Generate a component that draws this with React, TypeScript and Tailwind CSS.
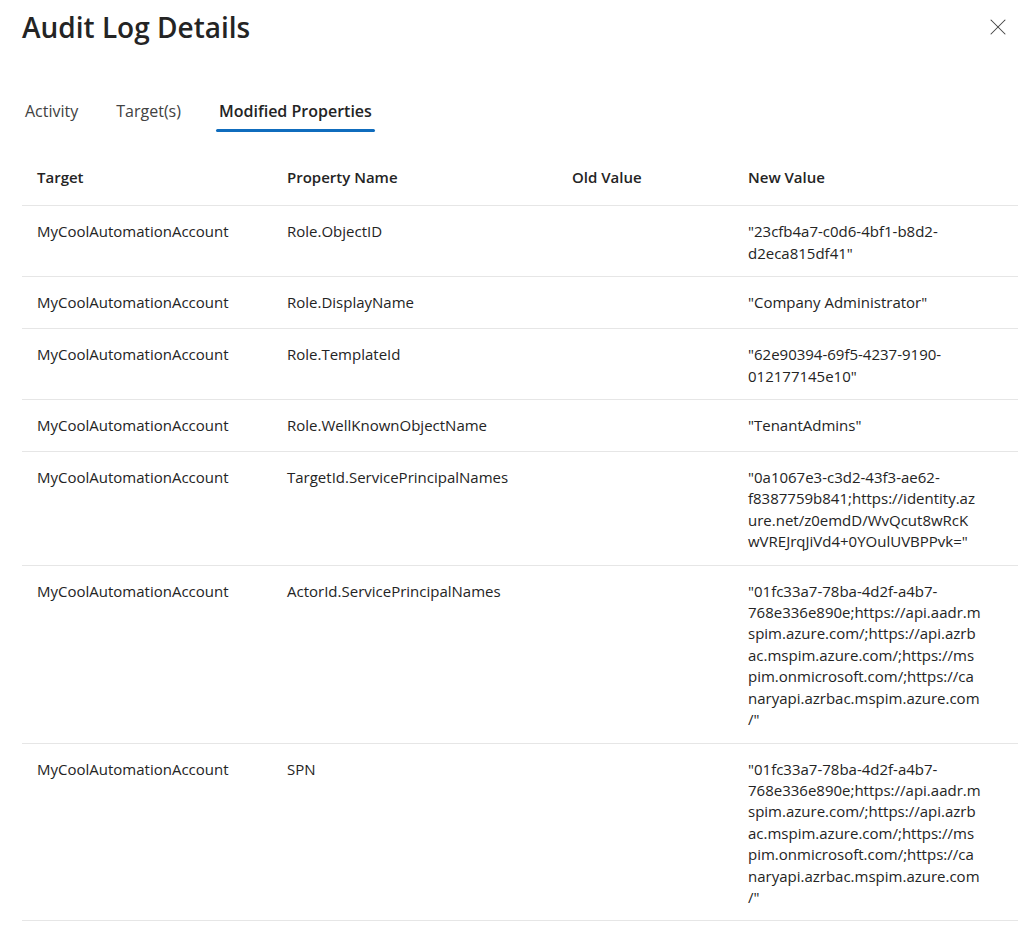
import { X } from "lucide-react";

type Row = {
  target: string;
  property: string;
  oldValue: string;
  newValue: string;
};

// New values keep the line breaks of the portal's narrow column
const spnValue = [
  '"01fc33a7-78ba-4d2f-a4b7-',
  "768e336e890e;https://api.aadr.m",
  "spim.azure.com/;https://api.azrb",
  "ac.mspim.azure.com/;https://ms",
  "pim.onmicrosoft.com/;https://ca",
  "naryapi.azrbac.mspim.azure.com",
  '/"',
].join("\n");

const rows: Row[] = [
  {
    target: "MyCoolAutomationAccount",
    property: "Role.ObjectID",
    oldValue: "",
    newValue: '"23cfb4a7-c0d6-4bf1-b8d2-\nd2eca815df41"',
  },
  {
    target: "MyCoolAutomationAccount",
    property: "Role.DisplayName",
    oldValue: "",
    newValue: '"Company Administrator"',
  },
  {
    target: "MyCoolAutomationAccount",
    property: "Role.TemplateId",
    oldValue: "",
    newValue: '"62e90394-69f5-4237-9190-\n012177145e10"',
  },
  {
    target: "MyCoolAutomationAccount",
    property: "Role.WellKnownObjectName",
    oldValue: "",
    newValue: '"TenantAdmins"',
  },
  {
    target: "MyCoolAutomationAccount",
    property: "TargetId.ServicePrincipalNames",
    oldValue: "",
    newValue:
      '"0a1067e3-c3d2-43f3-ae62-\nf8387759b841;https://identity.az\nure.net/z0emdD/WvQcut8wRcK\nwVREJrqJiVd4+0YOulUVBPPvk="',
  },
  {
    target: "MyCoolAutomationAccount",
    property: "ActorId.ServicePrincipalNames",
    oldValue: "",
    newValue: spnValue,
  },
  {
    target: "MyCoolAutomationAccount",
    property: "SPN",
    oldValue: "",
    newValue: spnValue,
  },
];

const tabs = ["Activity", "Target(s)", "Modified Properties"];

export default function App() {
  return (
    <div className="w-[1024px] min-h-[925px] bg-white text-[#242424] font-['Segoe_UI','Open_Sans',sans-serif]">
      {/* Header */}
      <div className="flex items-start justify-between pl-[22px] pr-[12px] pt-[8px]">
        <h1 className="text-[28px] leading-[38px] font-semibold">Audit Log Details</h1>
        <button className="mt-[5px] text-[#424242]" aria-label="Close">
          <X size={28} strokeWidth={0.9} />
        </button>
      </div>

      {/* Tabs */}
      <div className="mt-[54px] flex gap-[32px] pl-[22px]">
        {tabs.map((tab) => {
          const active = tab === "Modified Properties";
          return (
            <div key={tab} className="flex flex-col items-stretch">
              <span
                className={`px-[3px] text-[16px] leading-[22px] ${
                  active ? "font-semibold text-[#242424]" : "text-[#424242]"
                }`}
              >
                {tab}
              </span>
              <span
                className={`mt-[7px] h-[3px] rounded-full ${active ? "bg-[#0f6cbd]" : "bg-transparent"}`}
              />
            </div>
          );
        })}
      </div>

      {/* Table */}
      <table className="mt-[19px] ml-[22px] w-[996px] table-fixed border-collapse text-[15px] leading-[21.4px]">
        <colgroup>
          <col className="w-[250px]" />
          <col className="w-[285px]" />
          <col className="w-[176px]" />
          <col className="w-[285px]" />
        </colgroup>
        <thead>
          <tr className="border-b border-[#e6e6e6] text-left">
            <th className="pl-[15px] pt-[16px] pb-[17px] font-semibold">Target</th>
            <th className="pl-[15px] pt-[16px] pb-[17px] font-semibold">Property Name</th>
            <th className="pl-[15px] pt-[16px] pb-[17px] font-semibold">Old Value</th>
            <th className="pl-[15px] pt-[16px] pb-[17px] font-semibold">New Value</th>
          </tr>
        </thead>
        <tbody>
          {rows.map((row, i) => (
            <tr key={i} className="h-[52px] border-b border-[#e6e6e6] align-top">
              <td className="pl-[15px] pt-[15px] pb-[12px]">{row.target}</td>
              <td className="pl-[15px] pt-[15px] pb-[12px]">{row.property}</td>
              <td className="pl-[15px] pt-[15px] pb-[12px]">{row.oldValue}</td>
              <td className="pl-[15px] pr-[10px] pt-[15px] pb-[12px] whitespace-pre-line">
                {row.newValue}
              </td>
            </tr>
          ))}
        </tbody>
      </table>
    </div>
  );
}
